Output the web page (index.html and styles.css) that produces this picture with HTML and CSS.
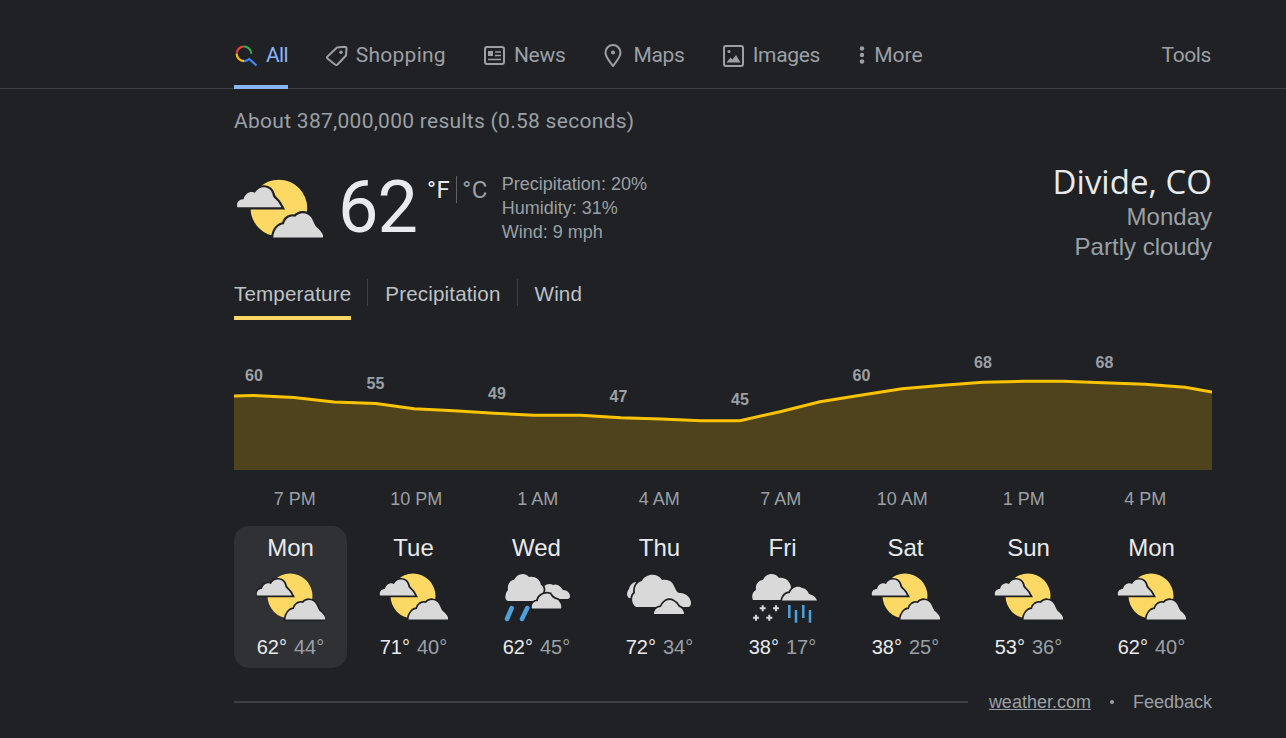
FILE: index.html
```html
<!DOCTYPE html>
<html lang="en">
<head>
    <meta charset="UTF-8">
    <meta name="viewport" content="width=device-width, initial-scale=1.0">
    <title>Divide, CO weather</title>
    <link rel="stylesheet" href="styles.css">
</head>
<body>

<svg class="defs" width="0" height="0">
  <symbol id="cloud-sun" viewBox="0 0 69 50">
    <circle class="sun" cx="34" cy="23" r="22.5"/>
    <path class="cloud" d="M1 22.500C0 18 3 16 6 16C7 11 12 9 15 11C18 5 27 5 29 12C29 15 32 16 34 19L36 22.500Z"/>
    <path class="cloud" d="M29.500 46.500C30 40 34 36 38 36C39 31 43 29 47 30C50 26 57 26 60 31C62 35 63 38 65 39C67 41 69 43 69.500 46.500Z"/>
  </symbol>
  <symbol id="storm" viewBox="0 0 69 50">
    <path class="cloud" d="M38 26C41 26 41 22 38 21C38 14 46 9 51 12C55 10 59 14 61 17C65 17 68 20 68 23C68 26 66 26 64 26Z"/>
    <path class="cloud" d="M6 28C2 27 3 20 6 17C5 12 8 7 12 7C15 0 23 -1 27 4C33 3 38 6 39 12C43 14 42 20 39 22C35 23 35 27 33 28Z"/>
    <path class="cloud" d="M30 35.500C29 31 32 28 36 28C36 23 43 19 48 21C50 25 53 26 56 27C58 29 60 32 59 35.500Z"/>
    <path class="rain wide" d="M9.700 35L5 46M25.300 35L20 46"/>
  </symbol>
  <symbol id="cloudy" viewBox="0 0 69 50">
    <path class="cloud" d="M4 25C1 23 2 18 4 16C5 12 8 9 11 9C10 13 8 20 9 26Z"/>
    <path class="cloud" d="M11 34C6 31 6 23 10 20C9 14 12 9 17 8C20 1 32 -1 37 7C43 6 47 8 49 13C52 19 52 20 56 20C62 21 66 25 66 30C66 32 65 34 63 34Z"/>
    <path class="cloud" d="M29 41C29 37 32 34 36 34C38 29 43 25 48 28C52 30 53 33 54 34C57 35 59 38 59 41Z"/>
  </symbol>
  <symbol id="snow-rain" viewBox="0 0 69 50">
    <path class="cloud" d="M5 27C3 23 5 18 8 17C7 11 11 7 15 7C18 0 27 -1 31 5C37 4 42 8 43 14C43 18 42 22 40 27Z"/>
    <path class="cloud" d="M34 27.500C35 23 38 20 42 20C43 15 50 12 54 15C57 15 60 18 61 21C65 22 68 24 69 27.500Z"/>
    <path class="flake" d="M11.700 35.300h6M14.700 32.300v6M25 35.300h6M28 32.300v6M5 44.700h6M8 41.700v6M18.300 44.700h6M21.300 41.700v6"/>
    <path class="rain" d="M41.300 32V45M48 37V49.700M55.300 32V45M62 37V49.700"/>
  </symbol>
</svg>

<div class="page">

  <nav class="nav">
    <a class="nav-item active all">
      <svg class="nav-icon" viewBox="0 0 24 24">
        <path class="lens-r" d="M2.700 10.800A7.300 7.300 0 0 1 10 3.500"/>
        <path class="lens-gg" d="M10 3.500A7.300 7.300 0 0 1 17.300 10.800"/>
        <path class="lens-y" d="M2.700 10.800A7.300 7.300 0 0 0 10 18.100"/>
        <path class="lens-b" d="M10 18.100A7.300 7.300 0 0 0 15.200 16L22.500 22.500"/>
      </svg>
      <span>All</span>
    </a>
    <a class="nav-item shopping">
      <svg class="nav-icon" viewBox="0 0 24 24">
        <path class="line" d="M13 4.500L20.500 3.800Q22.500 3.800 22.500 5.800L22 12.500L13.500 21.500Q12.500 22.500 11 21.500L3.500 15.500Q2.500 14.500 3.500 13.500Z"/>
        <circle class="dot" cx="17" cy="9.300" r="1.700"/>
      </svg>
      <span>Shopping</span>
    </a>
    <a class="nav-item tight">
      <svg class="nav-icon" viewBox="0 0 24 24">
        <rect class="line" x="3" y="4" width="19" height="17" rx="2"/>
        <rect class="dot" x="6" y="8" width="5" height="5"/>
        <path class="line thin" d="M13 9h6M13 12.500h6M6 16.500h13"/>
      </svg>
      <span>News</span>
    </a>
    <a class="nav-item tight">
      <svg class="nav-icon" viewBox="0 0 24 24">
        <path class="line" d="M12 23C9 18.500 4.500 14.500 4.500 9.500A7.500 7.500 0 0 1 19.500 9.500C19.500 14.500 15 18.500 12 23Z"/>
        <circle class="dot" cx="12" cy="9.500" r="2"/>
      </svg>
      <span>Maps</span>
    </a>
    <a class="nav-item tight">
      <svg class="nav-icon" viewBox="0 0 24 24">
        <rect class="line" x="3" y="3" width="19" height="20" rx="2"/>
        <circle class="dot" cx="8" cy="8.500" r="1.500"/>
        <path class="dot" d="M5.500 19.500L9.500 14.500L11.500 16.500L15 12L19.500 19.500Z"/>
      </svg>
      <span>Images</span>
    </a>
    <a class="nav-item more">
      <svg class="nav-icon" viewBox="0 0 12 24">
        <circle class="dot" cx="6" cy="5.500" r="2.200"/>
        <circle class="dot" cx="6" cy="12" r="2.200"/>
        <circle class="dot" cx="6" cy="18.500" r="2.200"/>
      </svg>
      <span>More</span>
    </a>
    <a class="nav-item tools"><span>Tools</span></a>
  </nav>

  <div class="result-stats">About 387,000,000 results (0.58 seconds)</div>

  <div class="hero">
    <svg class="hero-icon"><use href="#cloud-sun"/></svg>
    <div class="temp-now">62</div>
    <div class="units">
      <span class="unit on">°F</span>
      <span class="unit-sep"></span>
      <span class="unit">°C</span>
    </div>
    <div class="details">
      <div>Precipitation: 20%</div>
      <div>Humidity: 31%</div>
      <div>Wind: 9 mph</div>
    </div>
    <div class="place">
      <div class="place-name">Divide, CO</div>
      <div>Monday</div>
      <div>Partly cloudy</div>
    </div>
  </div>

  <div class="tabs">
    <div class="tab active">Temperature</div>
    <div class="tab-sep"></div>
    <div class="tab">Precipitation</div>
    <div class="tab-sep"></div>
    <div class="tab">Wind</div>
  </div>

  <svg class="chart" viewBox="234 350 978 120">
    <path class="chart-fill" d="M234 396L254 395.500L294 397.500L334 402L376 403.500L414 408.700L454 410.700L494 413.300L534 415.300L581 415.300L621 417.700L661 419L701 420.700L740 420.700L780 411.700L820 401.700L862 395L902 388.700L943 385.300L983 382.300L1023 381.300L1063 381.300L1103 382.700L1145 384.300L1185 387.300L1212 392L1212 470L234 470Z"/>
    <path class="chart-line" d="M234 396L254 395.500L294 397.500L334 402L376 403.500L414 408.700L454 410.700L494 413.300L534 415.300L581 415.300L621 417.700L661 419L701 420.700L740 420.700L780 411.700L820 401.700L862 395L902 388.700L943 385.300L983 382.300L1023 381.300L1063 381.300L1103 382.700L1145 384.300L1185 387.300L1212 392"/>
    <text class="chart-label" x="254" y="381">60</text>
    <text class="chart-label" x="375.500" y="389">55</text>
    <text class="chart-label" x="497" y="399">49</text>
    <text class="chart-label" x="618.500" y="402">47</text>
    <text class="chart-label" x="740" y="405">45</text>
    <text class="chart-label" x="861.500" y="381">60</text>
    <text class="chart-label" x="983" y="368">68</text>
    <text class="chart-label" x="1104.500" y="368">68</text>
  </svg>

  <div class="times">
    <div>7 PM</div>
    <div>10 PM</div>
    <div>1 AM</div>
    <div>4 AM</div>
    <div>7 AM</div>
    <div>10 AM</div>
    <div>1 PM</div>
    <div>4 PM</div>
  </div>

  <div class="days">
    <div class="day active">
      <div class="day-name">Mon</div>
      <svg class="day-icon"><use href="#cloud-sun"/></svg>
      <div class="day-temps"><span class="hi">62°</span><span class="lo">44°</span></div>
    </div>
    <div class="day">
      <div class="day-name">Tue</div>
      <svg class="day-icon"><use href="#cloud-sun"/></svg>
      <div class="day-temps"><span class="hi">71°</span><span class="lo">40°</span></div>
    </div>
    <div class="day">
      <div class="day-name">Wed</div>
      <svg class="day-icon"><use href="#storm"/></svg>
      <div class="day-temps"><span class="hi">62°</span><span class="lo">45°</span></div>
    </div>
    <div class="day">
      <div class="day-name">Thu</div>
      <svg class="day-icon"><use href="#cloudy"/></svg>
      <div class="day-temps"><span class="hi">72°</span><span class="lo">34°</span></div>
    </div>
    <div class="day">
      <div class="day-name">Fri</div>
      <svg class="day-icon"><use href="#snow-rain"/></svg>
      <div class="day-temps"><span class="hi">38°</span><span class="lo">17°</span></div>
    </div>
    <div class="day">
      <div class="day-name">Sat</div>
      <svg class="day-icon"><use href="#cloud-sun"/></svg>
      <div class="day-temps"><span class="hi">38°</span><span class="lo">25°</span></div>
    </div>
    <div class="day">
      <div class="day-name">Sun</div>
      <svg class="day-icon"><use href="#cloud-sun"/></svg>
      <div class="day-temps"><span class="hi">53°</span><span class="lo">36°</span></div>
    </div>
    <div class="day">
      <div class="day-name">Mon</div>
      <svg class="day-icon"><use href="#cloud-sun"/></svg>
      <div class="day-temps"><span class="hi">62°</span><span class="lo">40°</span></div>
    </div>
  </div>

  <div class="footer">
    <div class="footer-line"></div>
    <a class="source">weather.com</a>
    <span class="footer-dot"></span>
    <a>Feedback</a>
  </div>

</div>
</body>
</html>
```

FILE: styles.css
```css
body {
  margin: 0;
  background: #202124;
  color: #9aa0a6;
  font-family: "Liberation Sans", Arial, sans-serif;
  font-size: 18px;
  overflow: hidden;
}

.defs {
  display: block;
  height: 0;
}

.page {
  width: 978px;
  margin-left: 234px;
}

/* top nav */
.nav {
  display: flex;
  gap: 36px;
  height: 89px;
  margin-left: -234px;
  margin-right: -74px;
  padding-left: 234px;
  padding-right: 75px;
  box-sizing: border-box;
  box-shadow: inset 0 -1px 0 #3c4043;
  font-family: Roboto, sans-serif;
  font-size: 21px;
  line-height: 30px;
}

.nav-item {
  display: flex;
  gap: 8px;
  height: 89px;
  padding-top: 40px;
  box-sizing: border-box;
}

.nav-item.active {
  color: #8ab4f8;
  border-bottom: 4px solid #8ab4f8;
}

.nav-item.all {
  letter-spacing: -0.7px;
}

.nav-item.shopping {
  letter-spacing: 0.25px;
}

.nav-item.tight {
  letter-spacing: -0.3px;
}

.nav-item.more {
  gap: 6px;
}

.nav-item.tools {
  margin-left: auto;
  letter-spacing: -0.4px;
}

.nav-icon {
  width: 24px;
  height: 24px;
  margin-top: 3px;
}

.more .nav-icon {
  width: 12px;
}

.line {
  fill: none;
  stroke: #9aa0a6;
  stroke-width: 2;
}

.line.thin {
  stroke-width: 1.500;
}

.dot {
  fill: #9aa0a6;
}

.lens-r, .lens-y, .lens-gg, .lens-b {
  fill: none;
  stroke-width: 2.200;
}
.lens-r { stroke: #ea4335; }
.lens-y { stroke: #fbbc04; }
.lens-gg { stroke: #34a853; }
.lens-b { stroke: #4285f4; }

.result-stats {
  margin-top: 17px;
  font-family: Roboto, sans-serif;
  font-size: 21px;
  letter-spacing: 0.28px;
  line-height: 30px;
}

/* current conditions */
.hero {
  display: flex;
  margin-top: 26px;
  height: 100px;
}

.hero-icon {
  width: 87px;
  height: 63px;
  margin-top: 17px;
  margin-left: 2px;
}

.temp-now {
  margin-left: 15px;
  width: 78px;
  color: #e8eaed;
  font-family: Roboto, sans-serif;
  font-size: 72px;
  letter-spacing: -1px;
  line-height: 92px;
}

.units {
  display: flex;
  margin-left: 11px;
  margin-top: 14px;
  font-family: Roboto, sans-serif;
  font-size: 24px;
  letter-spacing: 0.5px;
  line-height: 28px;
}

.unit.on {
  color: #e8eaed;
}

.unit-sep {
  width: 1px;
  height: 27px;
  margin: 0 5px 0 6px;
  background: #5f6368;
}

.details {
  margin-left: 14px;
  margin-top: 10px;
  line-height: 24px;
}

.place {
  margin-left: auto;
  text-align: right;
  font-size: 24px;
  line-height: 30px;
}

.place-name {
  color: #e8eaed;
  font-family: "Open Sans", sans-serif;
  font-size: 33px;
  line-height: 40px;
}

/* tabs */
.tabs {
  display: flex;
  margin-top: 10px;
  height: 48px;
  font-size: 20.6px;
  letter-spacing: 0.15px;
  line-height: 30px;
  color: #bdc1c6;
}

.tab {
  padding-top: 7px;
  box-sizing: border-box;
  height: 48px;
}

.tab.active {
  border-bottom: 4px solid #fdd663;
}

.tab-sep {
  width: 1px;
  height: 27px;
  margin: 7px 17px 0 16px;
  background: #3c4043;
}

/* chart */
.chart {
  display: block;
  width: 978px;
  height: 120px;
  margin-top: 30px;
}

.chart-fill {
  fill: #4f431d;
}

.chart-line {
  fill: none;
  stroke: #fcc400;
  stroke-width: 3;
}

.chart-label {
  fill: #9aa0a6;
  font-size: 16px;
  font-weight: bold;
  text-anchor: middle;
}

.times {
  display: grid;
  grid-template-columns: repeat(8, 1fr);
  width: 972px;
  margin-top: 14px;
  line-height: 30px;
  text-align: center;
}

/* daily forecast */
.days {
  display: grid;
  grid-template-columns: repeat(8, 113px);
  gap: 10px;
  margin-top: 12px;
}

.day {
  height: 142px;
  padding-top: 7px;
  box-sizing: border-box;
  border-radius: 15px;
  text-align: center;
}

.day.active {
  background: #303134;
}

.day-name {
  color: #e8eaed;
  font-size: 24px;
  line-height: 30px;
}

.day-icon {
  display: block;
  width: 69px;
  height: 50px;
  margin: 10px auto 0 auto;
}

.day-temps {
  display: flex;
  justify-content: center;
  gap: 7px;
  margin-top: 9px;
  font-size: 20px;
  line-height: 30px;
}

.hi {
  color: #e8eaed;
}

/* weather icons */
.sun {
  fill: #fcd964;
}

.cloud {
  fill: #d9d9d9;
  stroke: #202124;
  stroke-width: 3.500;
  paint-order: stroke;
}

.rain {
  fill: none;
  stroke: #4ba3dc;
  stroke-width: 2.500;
}

.rain.wide {
  stroke-width: 4.500;
  stroke-linecap: round;
}

.flake {
  fill: none;
  stroke: #d9d9d9;
  stroke-width: 2;
}

/* footer */
.footer {
  display: flex;
  align-items: center;
  margin-top: 19px;
  line-height: 30px;
}

.footer-line {
  flex: 1;
  height: 2px;
  background: #3c4043;
  margin-right: 21px;
}

.source {
  text-decoration: underline;
}

.footer-dot {
  width: 4px;
  height: 4px;
  margin: 0 19px;
  border-radius: 50%;
  background: #9aa0a6;
}
```
